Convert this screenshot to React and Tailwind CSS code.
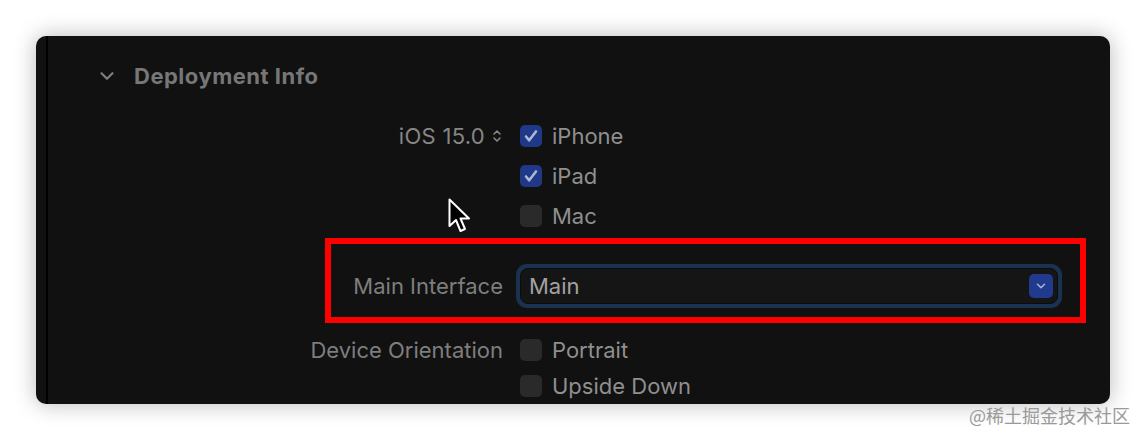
import { ChevronDown } from "lucide-react";

function Checkbox({ checked }) {
  return (
    <div
      className={
        checked
          ? "w-[22px] h-[22px] rounded-[5px] bg-[#1f3887] flex items-center justify-center"
          : "w-[22px] h-[22px] rounded-[5px] bg-[#2a2a2a]"
      }
    >
      {checked ? (
        <svg width="16" height="16" viewBox="0 0 16 16" fill="none">
          <path
            d="M3 8.5l3.2 3.8L13 3.5"
            stroke="#aab6d2"
            strokeWidth="2.6"
            strokeLinecap="round"
            strokeLinejoin="round"
          />
        </svg>
      ) : null}
    </div>
  );
}

function CheckRow({ label, checked, h = "h-[40px]" }) {
  return (
    <div className={"flex items-center gap-[10px] " + h}>
      <Checkbox checked={checked} />
      <span className="text-[22px] text-[#8f8f8f]">{label}</span>
    </div>
  );
}

function Cursor() {
  return (
    <svg
      className="absolute left-[448px] top-[198px]"
      width="26"
      height="38"
      viewBox="0 0 26 38"
    >
      <path
        d="M1.5 1.5 L1.5 28 L8 22 L12.5 33 L17 31 L12.5 20.5 L21 20.5 Z"
        fill="#000"
        stroke="#fff"
        strokeWidth="2"
        strokeLinejoin="round"
      />
    </svg>
  );
}

export default function App() {
  return (
    <div className="relative h-[440px] w-[1146px] bg-white pt-[36px] pl-[36px] font-['Inter','Noto_Sans',sans-serif] overflow-hidden">
      {/* panel */}
      <div className="w-[1074px] h-[368px] rounded-[10px] bg-[#111111] shadow-[0_0_22px_rgba(0,0,0,0.28)] pl-[10px] overflow-hidden">
        <div className="h-full border-l-2 border-black pt-[26px]">
          {/* header */}
          <div className="flex items-center h-[28px] ml-[48px] gap-[16px]">
            <ChevronDown className="w-[22px] h-[22px] text-[#7d7d7d]" strokeWidth={2.4} />
            <span className="text-[22px] font-bold tracking-[0.5px] text-[#777777]">Deployment Info</span>
          </div>

          {/* iOS / devices */}
          <div className="flex mt-[26px]">
            <div className="w-[455px] flex justify-end h-[40px] items-center gap-[6px]">
              <span className="text-[22px] text-[#868686] tracking-[0.3px]">iOS 15.0</span>
              <svg width="12" height="16" viewBox="0 0 12 16" fill="none">
                <path d="M3 6l3-3 3 3M3 10l3 3 3-3" stroke="#868686" strokeWidth="1.6" strokeLinecap="round" strokeLinejoin="round" />
              </svg>
            </div>
            <div className="ml-[17px] flex flex-col">
              <CheckRow label="iPhone" checked />
              <CheckRow label="iPad" checked />
              <CheckRow label="Mac" />
            </div>
          </div>

          {/* main interface, highlighted */}
          <div className="ml-[277px] mt-[2px] w-[761px] h-[85px] border-[6px] border-[#ff0000] pt-[20px] flex items-start">
            <div className="w-[172px] h-[44px] flex items-center justify-end">
              <span className="text-[22px] text-[#7e7e7e]">Main Interface</span>
            </div>
            <div className="ml-[13px] w-[546px] h-[44px] rounded-[11px] bg-[#1b3150] p-[4px]">
              <div className="h-full rounded-[8px] bg-[#151515] border border-[#0c0c0c] flex items-center justify-between pl-[8px] pr-[4px]">
                <span className="text-[22px] text-[#a2a2a2]">Main</span>
                <div className="w-[24px] h-[24px] rounded-[5px] bg-[#203a8d] flex items-center justify-center">
                  <ChevronDown className="w-[14px] h-[14px] text-[#9fb0d6]" strokeWidth={2.8} />
                </div>
              </div>
            </div>
          </div>

          {/* device orientation */}
          <div className="flex mt-[9px]">
            <div className="w-[455px] flex justify-end h-[36px] items-center">
              <span className="text-[22px] text-[#7e7e7e]">Device Orientation</span>
            </div>
            <div className="ml-[17px] flex flex-col">
              <CheckRow label="Portrait" h="h-[36px]" />
              <CheckRow label="Upside Down" h="h-[36px]" />
            </div>
          </div>
        </div>
      </div>

      <div className="flex justify-end pr-[16px] mt-[1px]">
        <span className="text-[18px] leading-[20px] text-[#9a9a9a] font-['Noto_Sans_CJK_SC',sans-serif]">@稀土掘金技术社区</span>
      </div>

      <Cursor />
    </div>
  );
}
